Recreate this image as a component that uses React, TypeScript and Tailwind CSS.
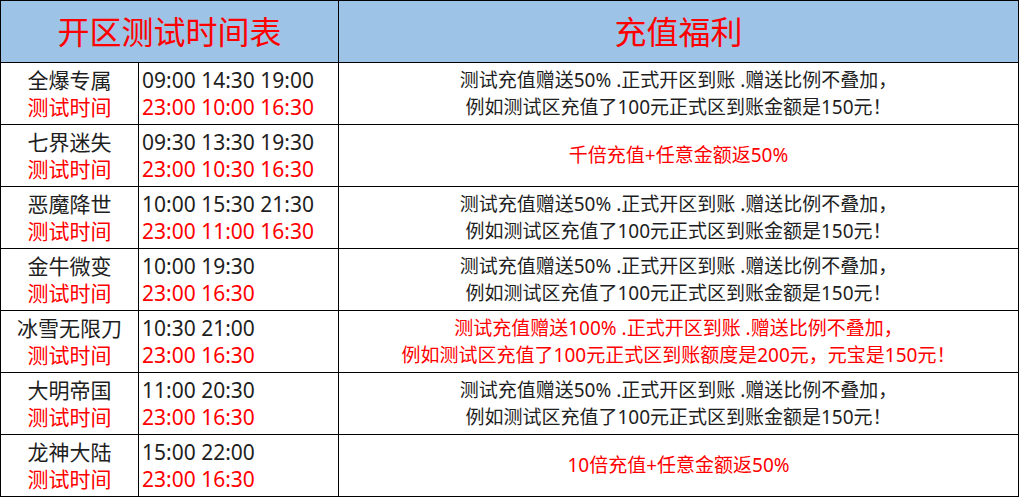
const ROWS = [
  { name: '全爆专属', open: '09:00 14:30 19:00', test: '23:00 10:00 16:30', kind: 'std' },
  { name: '七界迷失', open: '09:30 13:30 19:30', test: '23:00 10:30 16:30', kind: 'k1000' },
  { name: '恶魔降世', open: '10:00 15:30 21:30', test: '23:00 11:00 16:30', kind: 'std' },
  { name: '金牛微变', open: '10:00 19:30', test: '23:00 16:30', kind: 'std' },
  { name: '冰雪无限刀', open: '10:30 21:00', test: '23:00 16:30', kind: 'red' },
  { name: '大明帝国', open: '11:00 20:30', test: '23:00 16:30', kind: 'std' },
  { name: '龙神大陆', open: '15:00 22:00', test: '23:00 16:30', kind: 'k10' },
];

const font = { fontFamily: '"Noto Sans", "Noto Sans CJK SC", sans-serif' };

function Benefit({ kind }: { kind: string }) {
  if (kind === 'k1000') return <div className="text-[#ff0000]">千倍充值+任意金额返50%</div>;
  if (kind === 'k10') return <div className="text-[#ff0000]">10倍充值+任意金额返50%</div>;
  if (kind === 'red')
    return (
      <div className="text-[#ff0000]">
        <div>测试充值赠送100% .正式开区到账 .赠送比例不叠加，</div>
        <div>例如测试区充值了100元正式区到账额度是200元，元宝是150元！</div>
      </div>
    );
  return (
    <div className="text-[#1e1e1e]">
      <div>测试充值赠送50% .正式开区到账 .赠送比例不叠加，</div>
      <div>例如测试区充值了100元正式区到账金额是150元！</div>
    </div>
  );
}

export default function App() {
  return (
    <div className="w-[1019px] h-[497px] bg-white" style={font}>
      <div className="grid grid-cols-[138px_200px_680px] auto-rows-[62px] border-l border-t border-black">
        <div className="col-span-2 bg-[#9dc3e6] border-r border-b border-black flex items-center justify-center text-[32px] text-[#ff0000] leading-none">
          开区测试时间表
        </div>
        <div className="bg-[#9dc3e6] border-r border-b border-black flex items-center justify-center text-[32px] text-[#ff0000] leading-none">
          充值福利
        </div>
        {ROWS.map((r) => (
          <div key={r.name} className="contents">
            <div className="border-r border-b border-black flex flex-col items-center justify-center text-[21px] leading-[27px]">
              <div className="text-[#1e1e1e]">{r.name}</div>
              <div className="text-[#ff0000]">测试时间</div>
            </div>
            <div className="border-r border-b border-black flex flex-col justify-center pl-[3px] text-[21px] leading-[27px]">
              <div className="text-[#1e1e1e]">{r.open}</div>
              <div className="text-[#ff0000]">{r.test}</div>
            </div>
            <div className="border-r border-b border-black flex items-center justify-center text-center text-[19px] leading-[27px]">
              <Benefit kind={r.kind} />
            </div>
          </div>
        ))}
      </div>
    </div>
  );
}
